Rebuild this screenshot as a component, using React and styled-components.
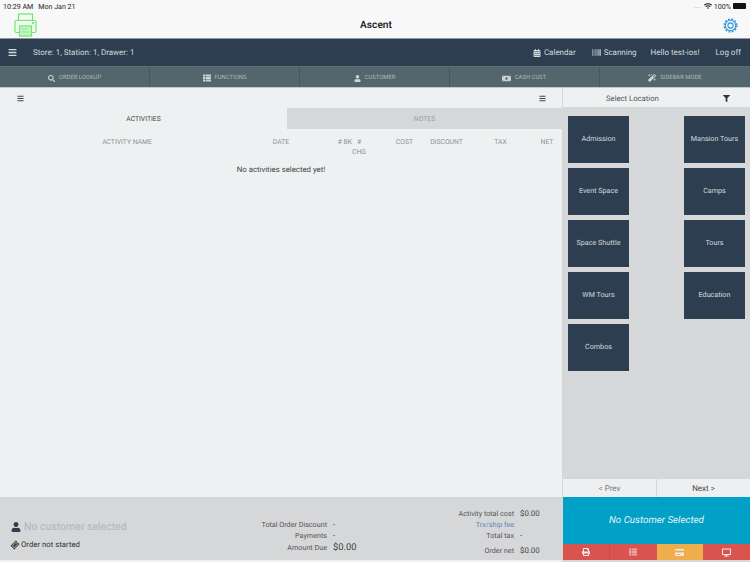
import React from "react";
import styled, { createGlobalStyle } from "styled-components";
import { FaSearch, FaUser, FaCalendarAlt, FaBarcode, FaMoneyBill, FaMagic, FaFilter, FaBars, FaTicketAlt, FaPrint, FaCreditCard, FaDesktop, FaThList, FaWifi } from "react-icons/fa";

const Global = createGlobalStyle`
  html, body { margin: 0; padding: 0; background: #eef1f2; }
  body { font-family: Roboto, "Liberation Sans", Arial, sans-serif; text-rendering: geometricPrecision; }
  * { box-sizing: border-box; }
`;

const Page = styled.div`
  width: 750px; height: 562px; display: flex; flex-direction: column; overflow: hidden; background: #eef1f2;
`;
const TopArea = styled.header`
  height: 39px; background: #f8f8f9; display: flex; flex-direction: column; border-bottom: 1px solid #8d97a1;
`;
const StatusBar = styled.div`
  height: 12px; padding: 0 4px 0 3px; display: flex; justify-content: space-between; align-items: center;
  font-size: 7.1px; color: #222;
`;
const StatusGroup = styled.div`
  display: flex; align-items: center; gap: ${p => p.$gap || 5}px;
`;
const Battery = styled.span`
  width: 13px; height: 6px; background: #111; border-radius: 1px; display: inline-block;
`;
const Dots = styled.span`
  color: #999; font-size: 7px; margin-right: 1px;
`;
const TitleRow = styled.div`
  flex: 1; display: grid; grid-template-columns: 1fr auto 1fr; align-items: center; padding: 0 12px 0 14px;
`;
const LogoSlot = styled.div`
  display: flex; justify-content: ${p => p.$end ? "flex-end" : "flex-start"};
`;
const Title = styled.div`
  font-size: 10.2px; font-weight: 500; color: #111; padding-top: 1px;
`;
const NavBar = styled.nav`
  height: 27px; background: #2c3e50; color: #d5dadf; display: flex; align-items: center; font-size: 8px;
`;
const NavLeft = styled.div`
  flex: 1; display: flex; align-items: center; gap: 16px; padding-left: 8px;
`;
const NavRight = styled.div`
  display: flex; align-items: center; padding-right: 9px;
`;
const NavItem = styled.span`
  display: flex; align-items: center; gap: 3px; margin-left: ${p => p.$gap || 0}px; white-space: nowrap;
`;
const Tabs = styled.div`
  height: 22px; background: #54666d; display: grid; grid-template-columns: repeat(5, 150px);
  border-top: 1px solid #5d6f76; border-bottom: 1px solid #c3c9cc;
`;
const TabItem = styled.div`
  display: flex; align-items: center; justify-content: center; gap: 4px; color: #aeb8bc; font-size: 5.9px;
  border-right: 1px solid #45565e; padding-top: 2px;
  &:last-child { border-right: 0; }
  svg { color: #cdd3d6; }
`;
const Body = styled.div`
  flex: 1; display: grid; grid-template-columns: 563px 187px; min-height: 0;
`;
const Main = styled.main`
  display: flex; flex-direction: column; border-right: 1px solid #d5d7d9; min-height: 0;
`;
const MainBar = styled.div`
  height: 20px; display: flex; align-items: center; justify-content: space-between; padding: 0 16px 0 17px; color: #444;
`;
const TabRow = styled.div`
  height: 21px; display: grid; grid-template-columns: 287px 1fr;
`;
const ContentTab = styled.div`
  display: flex; align-items: center; justify-content: center; font-size: 6.8px;
  background: ${p => p.$active ? "#eef1f2" : "#d5d7d9"}; color: ${p => p.$active ? "#444" : "#9a9c9e"};
`;
const Columns = styled.div`
  display: grid; grid-template-columns: 254px 54px 44px 14px 64px 33px 75px 18px; padding-top: 8px;
  font-size: 6.8px; color: #8d8f91; line-height: 10px; text-align: center;
`;
const RightCell = styled.div`
  text-align: right; padding-right: ${p => p.$pad || 0}px; white-space: nowrap;
`;
const EmptyMsg = styled.div`
  text-align: center; color: #444; font-size: 7.8px; line-height: 10px; margin-top: 8px;
`;
const Spacer = styled.div`
  flex: 1;
`;
const Footer = styled.footer`
  height: 63px; background: #d5d7d9; display: flex; padding: 0 0 0 11px; margin-bottom: 2px;
`;
const CustomerBlock = styled.div`
  width: 220px; display: flex; flex-direction: column; justify-content: flex-end; padding-bottom: 11px;
`;
const CustomerName = styled.div`
  display: flex; align-items: center; gap: 3px; color: #b2b4b6; font-size: 10.5px; margin-bottom: 7px; white-space: nowrap;
  svg { color: #2c3e50; }
`;
const OrderState = styled.div`
  display: flex; align-items: center; gap: 2px; color: #333; font-size: 7.8px;
  svg { color: #444; transform: rotate(-45deg); }
`;
const Totals = styled.div`
  width: ${p => p.$w}px; display: flex; flex-direction: column; justify-content: flex-end; padding-bottom: ${p => p.$pad}px;
`;
const TotalRow = styled.div`
  display: grid; grid-template-columns: ${p => p.$label}px auto; column-gap: 6px; align-items: baseline; height: ${p => p.$h || 11}px; white-space: nowrap;
  font-size: 7.2px; color: #555;
`;
const Label = styled.span`
  text-align: right; color: ${p => p.$link ? "#5b87b5" : "#555"};
`;
const Value = styled.span`
  font-size: ${p => p.$big ? 9.4 : 7.8}px; color: #444;
`;
const Side = styled.aside`
  display: flex; flex-direction: column; background: #d5d7d9; min-height: 0; padding-bottom: 2px;
`;
const SideHead = styled.div`
  height: 19px; background: #eef1f2; display: flex; align-items: center; justify-content: space-between;
  padding: 1px 20px 0 43px; font-size: 7.7px; color: #555;
  svg { color: #333; }
`;
const TileGrid = styled.div`
  flex: 1; display: grid; grid-template-columns: 61px 61px; grid-auto-rows: 47px; row-gap: 5px;
  justify-content: space-between; padding: 9px 5px 0 5px; align-content: start;
`;
const Tile = styled.button`
  background: #2c3e50; border: 0; color: #d5dadf; font: 7.2px Roboto, "Liberation Sans", Arial, sans-serif; padding: 0 0 2px; margin: 0;
  grid-column: ${p => p.$col}; grid-row: ${p => p.$row}; text-rendering: geometricPrecision;
`;
const Pager = styled.div`
  height: 18px; display: grid; grid-template-columns: 1fr 1fr; gap: 1px;
`;
const PageBtn = styled.div`
  background: #eeeff0; display: flex; align-items: center; justify-content: center; font-size: 8px; padding-top: 1px;
  color: ${p => p.$dim ? "#777" : "#444"};
`;
const CustomerCta = styled.div`
  height: 47px; background: #01a0c6; display: flex; align-items: center; justify-content: center;
  color: #e8f4f8; font-size: 9.8px; font-style: italic;
`;
const ActionRow = styled.div`
  height: 16px; display: grid; grid-template-columns: repeat(4, 1fr);
`;
const Action = styled.div`
  background: ${p => p.$bg}; color: #f7e9e7; display: flex; align-items: center; justify-content: center;
  border-right: 1px solid ${p => p.$edge || "transparent"};
`;

const PrinterLogo = () => (
  <svg width="23" height="24" viewBox="0 0 23 24" fill="none" stroke="#6fe86f" strokeWidth="1.2">
    <rect x="4.5" y="1" width="14" height="6.5" fill="#f2fdf2" />
    <rect x="1" y="7.5" width="21" height="12" rx="1.5" fill="#f2fdf2" />
    <rect x="5.5" y="13" width="12" height="10" fill="#c8f5c8" />
    <path d="M7.5 16h6M7.5 19h8" strokeWidth=".8" />
    <circle cx="19" cy="10" r=".5" fill="#6fe86f" />
  </svg>
);
const Gear = () => (
  <svg width="15" height="15" viewBox="0 0 16 16" fill="none" stroke="#2b93d9">
    <circle cx="8" cy="8" r="2.8" strokeWidth="1.1" />
    <circle cx="8" cy="8" r="5.5" strokeWidth="1.1" />
    <circle cx="8" cy="8" r="6.8" strokeWidth="1.4" strokeDasharray="2 1.56" />
  </svg>
);

const left = [["Admission",1],["Event Space",2],["Space Shuttle",3],["WM Tours",4],["Combos",5]];
const right = [["Mansion Tours",1],["Camps",2],["Tours",3],["Education",4]];

export default function App() {
  return (
    <Page>
      <Global />
      <TopArea>
        <StatusBar>
          <StatusGroup $gap={5}><span>10:29 AM</span><span>Mon Jan 21</span></StatusGroup>
          <StatusGroup $gap={2}><Dots>....</Dots><FaWifi size={8} color="#111" /><span>100%</span><Battery /></StatusGroup>
        </StatusBar>
        <TitleRow>
          <LogoSlot><PrinterLogo /></LogoSlot>
          <Title>Ascent</Title>
          <LogoSlot $end><Gear /></LogoSlot>
        </TitleRow>
      </TopArea>
      <NavBar>
        <NavLeft><FaBars size={9} /><span>Store: 1, Station: 1, Drawer: 1</span></NavLeft>
        <NavRight>
          <NavItem><FaCalendarAlt size={8} />Calendar</NavItem>
          <NavItem $gap={16}><FaBarcode size={9} />Scanning</NavItem>
          <NavItem $gap={14}>Hello test-ios!</NavItem>
          <NavItem $gap={16}>Log off</NavItem>
        </NavRight>
      </NavBar>
      <Tabs>
        <TabItem><FaSearch size={7} />ORDER LOOKUP</TabItem>
        <TabItem><FaThList size={8} />FUNCTIONS</TabItem>
        <TabItem><FaUser size={7} />CUSTOMER</TabItem>
        <TabItem><FaMoneyBill size={9} />CASH CUST.</TabItem>
        <TabItem><FaMagic size={8} />SIDEBAR MODE</TabItem>
      </Tabs>
      <Body>
        <Main>
          <MainBar><FaBars size={7} /><FaBars size={7} /></MainBar>
          <TabRow>
            <ContentTab $active>ACTIVITIES</ContentTab>
            <ContentTab>NOTES</ContentTab>
          </TabRow>
          <Columns>
            <div>ACTIVITY NAME</div>
            <div>DATE</div>
            <RightCell>#&nbsp;BK</RightCell>
            <div># CHG</div>
            <RightCell $pad={17}>COST</RightCell>
            <div>DISCOUNT</div>
            <div>TAX</div>
            <div>NET</div>
          </Columns>
          <EmptyMsg>No activities selected yet!</EmptyMsg>
          <Spacer />
          <Footer>
            <CustomerBlock>
              <CustomerName><FaUser size={10} />No customer selected</CustomerName>
              <OrderState><FaTicketAlt size={8} />Order not started</OrderState>
            </CustomerBlock>
            <Totals $w={130} $pad={4}>
              <TotalRow $label={96}><Label>Total Order Discount</Label><Value>-</Value></TotalRow>
              <TotalRow $label={96}><Label>Payments</Label><Value>-</Value></TotalRow>
              <TotalRow $label={96} $h={14}><Label>Amount Due</Label><Value $big>$0.00</Value></TotalRow>
            </Totals>
            <Totals $w={190} $pad={3}>
              <TotalRow $label={153}><Label>Activity total cost</Label><Value>$0.00</Value></TotalRow>
              <TotalRow $label={153}><Label $link>Trx/ship fee</Label><Value /></TotalRow>
              <TotalRow $label={153} $h={15}><Label>Total tax</Label><Value>-</Value></TotalRow>
              <TotalRow $label={153}><Label>Order net</Label><Value>$0.00</Value></TotalRow>
            </Totals>
          </Footer>
        </Main>
        <Side>
          <SideHead>Select Location<FaFilter size={7} /></SideHead>
          <TileGrid>
            {left.map(([t, r]) => <Tile key={t} $col={1} $row={r}>{t}</Tile>)}
            {right.map(([t, r]) => <Tile key={t} $col={2} $row={r}>{t}</Tile>)}
          </TileGrid>
          <Pager>
            <PageBtn $dim>&lt; Prev</PageBtn>
            <PageBtn>Next &gt;</PageBtn>
          </Pager>
          <CustomerCta>No Customer Selected</CustomerCta>
          <ActionRow>
            <Action $bg="#d9534f" $edge="#c94a46"><FaPrint size={8} /></Action>
            <Action $bg="#d9534f"><FaThList size={8} color="#eea9a6" /></Action>
            <Action $bg="#f0ad4e"><FaCreditCard size={9} /></Action>
            <Action $bg="#d9534f"><FaDesktop size={9} /></Action>
          </ActionRow>
        </Side>
      </Body>
    </Page>
  );
}
